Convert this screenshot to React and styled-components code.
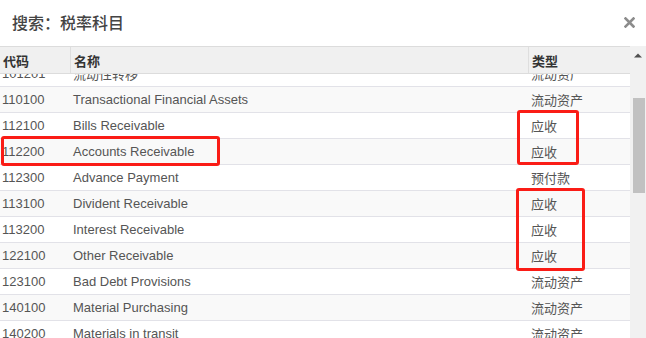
import React from "react";
import styled, { createGlobalStyle } from "styled-components";

const Global = createGlobalStyle`
  html, body { margin: 0; padding: 0; background: #fff; }
  body { font-family: "Liberation Sans", Arial, "Noto Sans CJK SC", sans-serif; }
  * { box-sizing: border-box; }
`;

const Page = styled.div`
  position: relative;
  width: 646px;
  height: 338px;
  overflow: hidden;
  background: #fff;
  display: flex;
  flex-direction: column;
`;

const TitleBar = styled.div`
  height: 46px;
  flex: none;
  display: flex;
  align-items: center;
  justify-content: space-between;
  padding: 0 10px 2px 12px;
`;

const Title = styled.h3`
  margin: 0;
  font-size: 16px;
  font-weight: 500;
  color: #444;
  font-family: "Noto Sans CJK SC", "Liberation Sans", sans-serif;
`;

const Close = styled.button`
  border: 0;
  background: none;
  padding: 0;
  width: 14px;
  height: 14px;
  display: flex;
  align-items: center;
  justify-content: center;
  cursor: pointer;
`;

const Grid = styled.div`
  flex: 1;
  display: flex;
  min-height: 0;
`;

const TableCol = styled.div`
  width: 630px;
  display: flex;
  flex-direction: column;
  min-height: 0;
`;

const HeadRow = styled.div`
  display: grid;
  grid-template-columns: 70px 458px 102px;
  height: 28px;
  background: #f0f0f0;
  border-top: 1px solid #dcdcdc;
  border-bottom: 1px solid #dcdcdc;
  flex: none;
`;

const HeadCell = styled.div`
  display: flex;
  align-items: center;
  padding-left: 3px;
  font-size: 13px;
  font-weight: bold;
  color: #333;
  font-family: "Noto Sans CJK SC", sans-serif;
  border-left: ${(p) => (p.$first ? "none" : "1px solid #dedede")};
`;

const Body = styled.div`
  flex: 1;
  overflow: hidden;
  min-height: 0;
`;

const Rows = styled.div`
  margin-top: -13px;
`;

const Row = styled.div`
  display: grid;
  grid-template-columns: 70px 458px 102px;
  height: 26px;
  border-bottom: 1px solid #e2e2e8;
  background: #fff;
  &:nth-child(even) {
    background: #f9f9f9;
  }
`;

const Cell = styled.div`
  display: flex;
  align-items: center;
  padding-left: ${(p) => (p.$first ? "2px" : "3px")};
  font-size: 13px;
  color: #555;
  white-space: nowrap;
  overflow: hidden;
  font-family: "Liberation Sans", Arial, "Noto Sans CJK SC", sans-serif;
`;

const Scrollbar = styled.div`
  width: 16px;
  background: #f1f1f1;
  display: flex;
  flex-direction: column;
  align-items: center;
  flex: none;
`;

const ArrowBtn = styled.div`
  height: 17px;
  width: 16px;
  display: flex;
  align-items: center;
  justify-content: center;
  padding-top: 1px;
`;

const Thumb = styled.div`
  width: 12px;
  height: 95px;
  margin-top: 35px;
  background: #c1c1c1;
  margin-left: 1px;
`;

const Mark = styled.div`
  position: absolute;
  border: 3px solid #fa1c16;
  border-radius: 3px;
  pointer-events: none;
`;

const data = [
  ["101201", "流动性转移", "流动资产"],
  ["110100", "Transactional Financial Assets", "流动资产"],
  ["112100", "Bills Receivable", "应收"],
  ["112200", "Accounts Receivable", "应收"],
  ["112300", "Advance Payment", "预付款"],
  ["113100", "Divident Receivable", "应收"],
  ["113200", "Interest Receivable", "应收"],
  ["122100", "Other Receivable", "应收"],
  ["123100", "Bad Debt Provisions", "流动资产"],
  ["140100", "Material Purchasing", "流动资产"],
  ["140200", "Materials in transit", "流动资产"],
  ["140300", "Raw Materials", "流动资产"],
];

const marks = [
  { left: 1, top: 136, width: 219, height: 30 },
  { left: 517, top: 110, width: 62, height: 55 },
  { left: 516, top: 188, width: 69, height: 83 },
];

export default function App() {
  return (
    <Page>
      <Global />
      <TitleBar>
        <Title>搜索：税率科目</Title>
        <Close aria-label="关闭">
          <svg width="11" height="11" viewBox="0 0 11 11">
            <path d="M1.5 1.5 L9.5 9.5 M9.5 1.5 L1.5 9.5" stroke="#8c8c8c" strokeWidth="2.6" strokeLinecap="square" />
          </svg>
        </Close>
      </TitleBar>
      <Grid>
        <TableCol>
          <HeadRow>
            <HeadCell $first>代码</HeadCell>
            <HeadCell>名称</HeadCell>
            <HeadCell>类型</HeadCell>
          </HeadRow>
          <Body>
            <Rows>
              {data.map(([code, name, type]) => (
                <Row key={code}>
                  <Cell $first>{code}</Cell>
                  <Cell>{name}</Cell>
                  <Cell>{type}</Cell>
                </Row>
              ))}
            </Rows>
          </Body>
        </TableCol>
        <Scrollbar>
          <ArrowBtn>
            <svg width="8" height="5" viewBox="0 0 8 5">
              <path d="M0 4.5 L4 0.5 L8 4.5 Z" fill="#505050" />
            </svg>
          </ArrowBtn>
          <Thumb />
        </Scrollbar>
      </Grid>
      {marks.map((m, i) => (
        <Mark key={i} style={{ left: m.left, top: m.top, width: m.width, height: m.height }} />
      ))}
    </Page>
  );
}
